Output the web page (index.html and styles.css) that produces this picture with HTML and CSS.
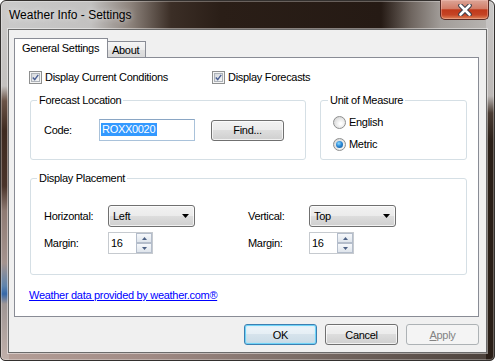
FILE: index.html
```html
<html lang="en">
  <head>
    <meta charset="UTF-8" />
    <meta name="viewport" content="width=device-width, initial-scale=1.0" />
    <title>Weather Info - Settings</title>
    <link rel="stylesheet" href="styles.css">
  </head>
  <body>
    <div class="window">
      <div class="titlebar">
        <span class="title">Weather Info - Settings</span>
        <div class="close">
          <svg width="14" height="12" viewBox="0 0 14 12">
            <path d="M2.5 1.5 L11.5 10.5 M11.5 1.5 L2.5 10.5" stroke="#3a3f4a" stroke-width="4.6" stroke-linecap="round" fill="none" />
            <path d="M2.5 1.5 L11.5 10.5 M11.5 1.5 L2.5 10.5" stroke="#ffffff" stroke-width="2.6" stroke-linecap="round" fill="none" />
          </svg>
        </div>
      </div>

      <div class="client">
        <div class="tabs">
          <div class="tab active">General Settings</div>
          <div class="tab">About</div>
        </div>

        <div class="panel">
          <div class="checks">
            <label class="check-item">
              <span class="check">
                <svg width="9" height="9" viewBox="0 0 9 9"><path d="M1 4.5 L3.5 7.2 L8 1.2" stroke="#4b5f94" stroke-width="1.8" fill="none" /></svg>
              </span>
              Display Current Conditions
            </label>
            <label class="check-item">
              <span class="check">
                <svg width="9" height="9" viewBox="0 0 9 9"><path d="M1 4.5 L3.5 7.2 L8 1.2" stroke="#4b5f94" stroke-width="1.8" fill="none" /></svg>
              </span>
              Display Forecasts
            </label>
          </div>

          <div class="groups">
            <fieldset class="group location">
              <legend>Forecast Location</legend>
              <div class="code-row">
                <span class="code-label">Code:</span>
                <div class="textbox"><span class="selected">ROXX0020</span></div>
                <div class="btn find">Find...</div>
              </div>
            </fieldset>

            <fieldset class="group units">
              <legend>Unit of Measure</legend>
              <label class="radio-item"><span class="radio"></span>English</label>
              <label class="radio-item"><span class="radio"><span class="dot"></span></span>Metric</label>
            </fieldset>
          </div>

          <fieldset class="group placement">
            <legend>Display Placement</legend>
            <div class="placement-grid">
              <span>Horizontal:</span>
              <div class="combo">
                <span>Left</span>
                <svg width="7" height="4" viewBox="0 0 7 4"><path d="M0 0 H7 L3.5 4 Z" fill="#000" /></svg>
              </div>
              <span>Vertical:</span>
              <div class="combo">
                <span>Top</span>
                <svg width="7" height="4" viewBox="0 0 7 4"><path d="M0 0 H7 L3.5 4 Z" fill="#000" /></svg>
              </div>

              <span>Margin:</span>
              <div class="spin">
                <span class="spin-value">16</span>
                <div class="spin-btns">
                  <div class="spin-btn"><svg width="5" height="3" viewBox="0 0 5 3"><path d="M0 3 H5 L2.5 0 Z" fill="#4d6185" /></svg></div>
                  <div class="spin-btn"><svg width="5" height="3" viewBox="0 0 5 3"><path d="M0 0 H5 L2.5 3 Z" fill="#4d6185" /></svg></div>
                </div>
              </div>
              <span>Margin:</span>
              <div class="spin">
                <span class="spin-value">16</span>
                <div class="spin-btns">
                  <div class="spin-btn"><svg width="5" height="3" viewBox="0 0 5 3"><path d="M0 3 H5 L2.5 0 Z" fill="#4d6185" /></svg></div>
                  <div class="spin-btn"><svg width="5" height="3" viewBox="0 0 5 3"><path d="M0 0 H5 L2.5 3 Z" fill="#4d6185" /></svg></div>
                </div>
              </div>
            </div>
          </fieldset>

          <a class="link" href="#">Weather data provided by weather.com®</a>
        </div>

        <div class="buttons">
          <div class="btn default">OK</div>
          <div class="btn">Cancel</div>
          <div class="btn disabled"><u>A</u>pply</div>
        </div>
      </div>
    </div>
  </body>
</html>
```

FILE: styles.css
```css
body {
  margin: 0;
  background: #ffffff;
  font-family: "Liberation Sans", Arial, sans-serif;
  font-size: 11px;
  letter-spacing: -0.3px;
  color: #000;
}
.window {
  width: 495px;
  height: 361px;
  box-sizing: border-box;
  border: 1px solid #33302e;
  border-radius: 6px 6px 5px 5px;
  padding: 0 7px 7px;
  display: flex;
  flex-direction: column;
  box-shadow: inset 0 0 0 1px rgba(255, 255, 255, 0.3);
  background:
    linear-gradient(to bottom, #cbc9c8 0, #c4c1bf 85px, #6b5448 100px, #3e2a20 130px, #4a342a 185px, #8f7b73 210px, #a5948f 262px, #5f84ad 285px, #3668a8 293px, #9f9694 303px, #c2b1ab 361px) left top / 8px 100% no-repeat,
    linear-gradient(to bottom, #c8c6c5 0, #bcb8b6 95px, #4a3c33 112px, #2a1f18 140px, #2a1f18 361px) right top / 8px 100% no-repeat,
    linear-gradient(to right, #b59f98 0, #a08a84 150px, #7a6c66 300px, #4a403a 495px) left bottom / 100% 8px no-repeat,
    linear-gradient(to right, #cacaca 0, #c2c1c0 90px, #8c827b 130px, #3b2e26 170px, #2a1e17 220px, #251a14 380px, #6e655f 410px, #a29d99 440px, #b9b6b3 490px) left top / 100% 30px no-repeat,
    #bdb9b6;
}
.titlebar {
  height: 28px;
  display: flex;
  align-items: center;
}
.title {
  font-size: 12px;
  letter-spacing: 0;
  padding-left: 1px;
  padding-bottom: 1px;
  text-shadow: 0 0 6px rgba(255, 255, 255, 0.8);
}
.close {
  margin-left: auto;
  align-self: flex-start;
  margin-top: -1px;
  margin-right: -2px;
  width: 49px;
  height: 20px;
  box-sizing: border-box;
  border: 1px solid #5b2a24;
  border-top: none;
  border-radius: 0 0 5px 5px;
  display: flex;
  align-items: center;
  justify-content: center;
  background: linear-gradient(#dca597 0%, #d27d68 45%, #c0391b 52%, #c54425 78%, #de8459 100%);
  box-shadow: inset 0 0 0 1px rgba(255, 210, 200, 0.35);
}
.client {
  flex: 1;
  background: #f0f0f0;
  border: 1px solid #6b6b6b;
  box-shadow: 0 0 0 1px rgba(255, 255, 255, 0.45);
  padding: 8px 7px 0 5px;
  display: flex;
  flex-direction: column;
}
.tabs {
  display: flex;
  align-items: flex-end;
}
.tab {
  box-sizing: border-box;
  border: 1px solid #898c95;
  border-bottom: none;
}
.tab.active {
  position: relative;
  z-index: 1;
  width: 94px;
  height: 20px;
  margin-bottom: -1px;
  padding-left: 7px;
  line-height: 18px;
  background: #ffffff;
}
.tab:not(.active) {
  width: 39px;
  height: 16px;
  margin-left: -1px;
  padding-left: 4px;
  line-height: 16px;
  background: linear-gradient(#f6f6f6, #ececec 50%, #e0e0e0 50%, #d9d9d9);
}
.panel {
  box-sizing: border-box;
  width: 465px;
  height: 260px;
  border: 1px solid #898c95;
  background: #ffffff;
  padding: 12px 0 0 14px;
  display: flex;
  flex-direction: column;
}
.checks {
  display: grid;
  grid-template-columns: 183px auto;
  height: 13px;
  margin-top: 1px;
}
.check-item,
.radio-item {
  display: flex;
  align-items: center;
  gap: 3px;
  height: 13px;
  line-height: 13px;
}
.check {
  box-sizing: border-box;
  width: 13px;
  height: 13px;
  border: 1px solid #8e8f8f;
  padding: 1px;
  background: #f4f4f4;
}
.check svg {
  display: block;
  box-sizing: border-box;
  width: 9px;
  height: 9px;
  border: 1px solid #aeb3b9;
  background: linear-gradient(135deg, #d5d8dc, #f6f6f6);
}
.radio {
  box-sizing: border-box;
  width: 13px;
  height: 13px;
  border: 1px solid #8e8f8f;
  border-radius: 50%;
  background: radial-gradient(circle at 60% 60%, #ffffff 10%, #d6d6d6 80%);
  display: flex;
  align-items: center;
  justify-content: center;
}
.dot {
  width: 7px;
  height: 7px;
  border-radius: 50%;
  background: radial-gradient(circle at 40% 35%, #8fdcff 0, #2d8ad8 45%, #0b4f8e 100%);
}
.group {
  margin: 0;
  min-width: 0;
  box-sizing: border-box;
  border: 1px solid #d5dfe5;
  border-radius: 3px;
}
.group legend {
  padding: 0 2px;
  line-height: 14px;
}
.groups {
  display: flex;
  gap: 14px;
  margin-top: 9px;
  padding-left: 1px;
}
.location {
  width: 276px;
  padding: 12px 0 18px 13px;
}
.location legend {
  margin-left: -7px;
}
.code-row {
  display: flex;
  align-items: center;
  height: 22px;
}
.code-label {
  width: 55px;
}
.textbox {
  box-sizing: border-box;
  width: 96px;
  height: 22px;
  border: 1px solid #a9c2da;
  border-top-color: #8aa6c4;
  background: #fff;
  padding: 3px 0 0 1px;
}
.selected {
  display: inline-block;
  background: #3399ff;
  color: #fff;
  line-height: 13px;
  padding: 0 2px 0 1px;
}
.find {
  margin-left: 16px;
}
.units {
  width: 147px;
  padding: 9px 0 0 12px;
  display: flex;
  flex-direction: column;
  gap: 9px;
}
.units legend {
  margin-left: -5px;
}
.placement {
  width: 437px;
  margin-left: 1px;
  margin-top: 11px;
  padding: 20px 0 20px 13px;
}
.placement legend {
  margin-left: -7px;
}
.placement-grid {
  display: grid;
  grid-template-columns: 64px 140px 61px auto;
  grid-auto-rows: 22px;
  row-gap: 5px;
  align-items: center;
}
.combo {
  box-sizing: border-box;
  width: 87px;
  height: 22px;
  border: 1px solid #707070;
  border-radius: 3px;
  padding: 0 5px 0 4px;
  display: flex;
  align-items: center;
  justify-content: space-between;
  background: linear-gradient(#f2f2f2, #ebebeb 50%, #dddddd 50%, #cfcfcf);
  box-shadow: inset 0 0 0 1px rgba(255, 255, 255, 0.7);
}
.spin {
  box-sizing: border-box;
  width: 45px;
  height: 22px;
  border: 1px solid #c6cacf;
  background: #fff;
  display: flex;
  align-items: center;
  justify-content: space-between;
  padding-left: 2px;
}
.spin-btns {
  display: flex;
  flex-direction: column;
  align-self: stretch;
  width: 16px;
}
.spin-btn {
  flex: 1;
  box-sizing: border-box;
  border: 1px solid #b4bdcb;
  display: flex;
  align-items: center;
  justify-content: center;
  background: linear-gradient(#f6f8fb, #dfe5ec);
}
.link {
  align-self: flex-start;
  margin-top: 13px;
  line-height: 14px;
  color: #0000ff;
  text-decoration: underline;
}
.buttons {
  display: flex;
  justify-content: flex-end;
  gap: 8px;
  margin-top: 7px;
}
.btn {
  box-sizing: border-box;
  width: 73px;
  height: 21px;
  border: 1px solid #707070;
  border-radius: 3px;
  display: flex;
  align-items: center;
  justify-content: center;
  background: linear-gradient(#f2f2f2, #ebebeb 50%, #dddddd 50%, #cfcfcf);
  box-shadow: inset 0 0 0 1px rgba(255, 255, 255, 0.7);
}
.btn.default {
  border-color: #3c7fb1;
  background: linear-gradient(#eef5fa, #e5eef4 50%, #d6e3ec 50%, #cadbe6);
  box-shadow: inset 0 0 0 1px #6fd3f7, inset 0 0 3px #8fe0fb;
}
.btn.disabled {
  border-color: #adb2b5;
  background: #f4f4f4;
  color: #838383;
  box-shadow: none;
}
```
